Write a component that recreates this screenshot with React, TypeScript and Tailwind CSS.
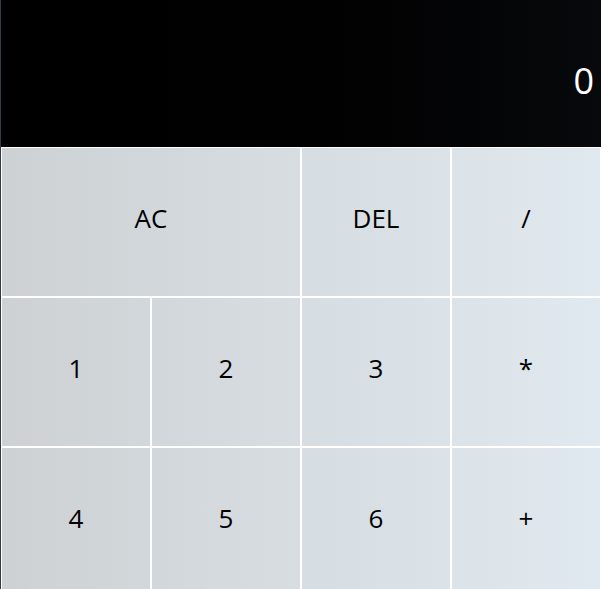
const keys = [
  { label: "AC", span: true },
  { label: "DEL" },
  { label: "/" },
  { label: "1" },
  { label: "2" },
  { label: "3" },
  { label: "*" },
  { label: "4" },
  { label: "5" },
  { label: "6" },
  { label: "+" },
]

export default function App() {
  return (
    <div
      className="h-[589px] w-[601px] overflow-hidden bg-[#2f3b47] pl-px"
      style={{ fontFamily: '"Open Sans", "Noto Sans", sans-serif' }}
    >
      <div className="flex h-[147px] items-end justify-end bg-gradient-to-r from-[#000000] to-[#08090c] pb-[48px] pr-[7px]">
        <span className="text-[36px] leading-none text-white">0</span>
      </div>
      <div className="grid grid-cols-4 bg-gradient-to-r from-[#cdd1d4] to-[#e0e9ef]">
        {keys.map((k) => (
          <button
            key={k.label}
            className={`h-[150px] border border-white pb-2 text-[26px] text-black ${k.span ? "col-span-2" : ""}`}
          >
            {k.label}
          </button>
        ))}
      </div>
    </div>
  )
}
